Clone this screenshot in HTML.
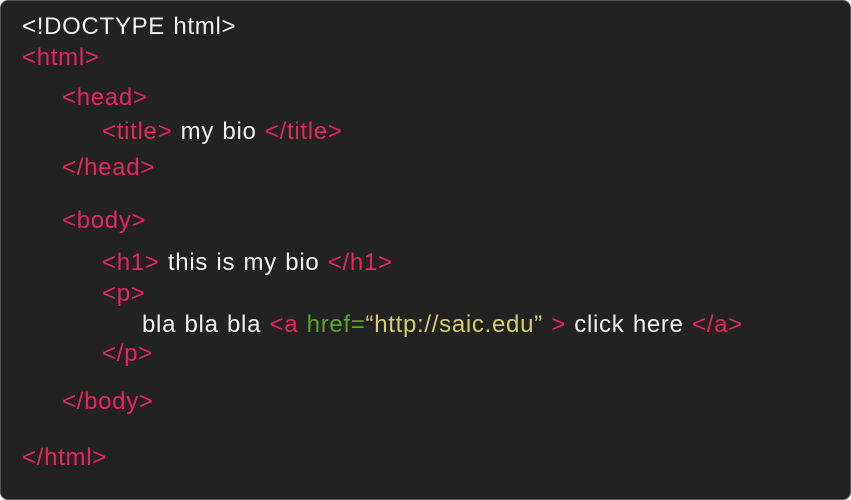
<!DOCTYPE html>
<html><head><style>
body{margin:0;background:#fff;}
#b{position:absolute;left:0;top:0;width:849px;height:498px;background:#222;border:1px solid #555;border-radius:8px;overflow:hidden;font-family:"Liberation Sans",Helvetica,Arial,sans-serif;font-size:24px;color:#f0f0f0;}
.l{position:absolute;line-height:26px;white-space:pre;letter-spacing:0.7px;word-spacing:1px}
.p{color:#e8245f}.g{color:#5ba52e}.y{color:#d6cd6c}
</style></head><body><div id="b">
<div class="l" style="left:21px;top:13px">&lt;!DOCTYPE html&gt;</div>
<div class="l p" style="left:21px;top:44px">&lt;html&gt;</div>
<div class="l p" style="left:61px;top:84px">&lt;head&gt;</div>
<div class="l" style="left:101px;top:118px"><span class="p">&lt;title&gt;</span> my bio <span class="p">&lt;/title&gt;</span></div>
<div class="l p" style="left:61px;top:154px">&lt;/head&gt;</div>
<div class="l p" style="left:61px;top:207px">&lt;body&gt;</div>
<div class="l" style="left:101px;top:249px"><span class="p">&lt;h1&gt;</span> this is my bio <span class="p">&lt;/h1&gt;</span></div>
<div class="l p" style="left:101px;top:280px">&lt;p&gt;</div>
<div class="l" style="left:141px;top:311px">bla bla bla <span class="p">&lt;a</span> <span class="g">href=</span><span class="y">“http://saic.edu”</span> <span class="p">&gt;</span> click here <span class="p">&lt;/a&gt;</span></div>
<div class="l p" style="left:101px;top:340px">&lt;/p&gt;</div>
<div class="l p" style="left:61px;top:388px">&lt;/body&gt;</div>
<div class="l p" style="left:21px;top:444px">&lt;/html&gt;</div>
</div></body></html>
